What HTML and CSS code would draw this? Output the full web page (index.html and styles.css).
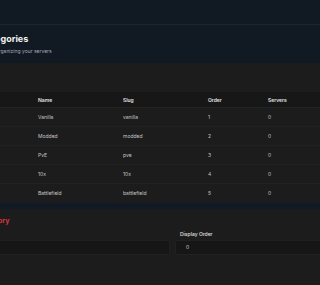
FILE: index.html
```html
<!DOCTYPE html>
<html>
<head>
<meta charset="utf-8">
<link rel="stylesheet" href="styles.css">
</head>
<body>
<div class="topbar"></div>
<header class="page-head">
  <h1 class="title">Categories</h1>
  <p class="subtitle">Used for organizing your servers</p>
</header>
<main class="main">
  <section class="card">
    <table class="table">
      <thead>
        <tr><th class="c0">ID</th><th class="c1">Name</th><th class="c2">Slug</th><th class="c3">Order</th><th class="c4">Servers</th></tr>
      </thead>
      <tbody>
        <tr><td class="c0">1</td><td class="c1">Vanilla</td><td class="c2">vanilla</td><td class="c3">1</td><td class="c4">0</td></tr>
        <tr><td class="c0">2</td><td class="c1">Modded</td><td class="c2">modded</td><td class="c3">2</td><td class="c4">0</td></tr>
        <tr><td class="c0">3</td><td class="c1">PvE</td><td class="c2">pve</td><td class="c3">3</td><td class="c4">0</td></tr>
        <tr><td class="c0">4</td><td class="c1">10x</td><td class="c2">10x</td><td class="c3">4</td><td class="c4">0</td></tr>
        <tr><td class="c0">5</td><td class="c1">Battlefield</td><td class="c2">battlefield</td><td class="c3">5</td><td class="c4">0</td></tr>
      </tbody>
    </table>
  </section>
  <div class="divider"></div>
  <section class="form-card">
    <h2 class="form-title">Add Category</h2>
    <div class="form-row">
      <div class="field">
        <label class="label">Name</label>
        <div class="input"></div>
      </div>
      <div class="field">
        <label class="label">Display Order</label>
        <div class="input">0</div>
      </div>
    </div>
  </section>
</main>
</body>
</html>
```
FILE: styles.css
```css
html, body {
  margin: 0;
  padding: 0;
  overflow: hidden;
  background: #1c1c1c;
  font-family: "Inter", "Open Sans", sans-serif;
}
.topbar {
  height: 24px;
  background: #111923;
  border-bottom: 1px solid #1a2531;
}
.page-head {
  background: #111923;
  height: 38px;
  margin-left: -20px;
  padding-top: 8px;
  box-sizing: border-box;
}
.title {
  margin: 0;
  font-size: 9px;
  line-height: 11px;
  font-weight: 700;
  color: #f2f2f2;
}
.subtitle {
  margin: 4px 0 0 -6px;
  font-size: 5px;
  line-height: 7px;
  color: #a9adb3;
}
.main {
  margin-left: -47px;
}
.card {
  padding-top: 29px;
}
.table {
  border-collapse: collapse;
  width: 380px;
  table-layout: fixed;
  font-size: 5px;
}
.table th {
  background: #171717;
  height: 15px;
  color: #e6e6e6;
  font-weight: 600;
  text-align: left;
  padding: 0;
}
.table td {
  height: 18px;
  padding: 0;
  color: #c8c8c8;
  border-top: 1px solid #222222;
}
.c0 { width: 85px; }
.c1 { width: 85px; }
.c2 { width: 85px; }
.c3 { width: 60px; }
.c4 { width: 65px; }
.divider {
  height: 10px;
  margin-top: -1px;
  background: linear-gradient(to bottom, #1c1c1c, #0e1926 50%, #1c1c1c);
}
.form-card {
  padding-left: 9px;
  padding-top: 5px;
}
.form-title {
  margin: 0;
  font-size: 7px;
  line-height: 9px;
  font-weight: 700;
  color: #d8343c;
}
.form-row {
  display: grid;
  grid-template-columns: 208px 160px;
  column-gap: 5px;
  margin-top: 6px;
}
.field {
  display: flex;
  flex-direction: column;
}
.label {
  font-size: 5px;
  line-height: 7px;
  color: #e0e0e0;
  padding-left: 5px;
  font-weight: 500;
}
.input {
  margin-top: 2px;
  height: 15px;
  background: #161616;
  border: 1px solid #202020;
  border-radius: 2px;
  box-sizing: border-box;
  font-size: 5px;
  line-height: 13px;
  color: #d0d0d0;
  padding-left: 10px;
}
```
